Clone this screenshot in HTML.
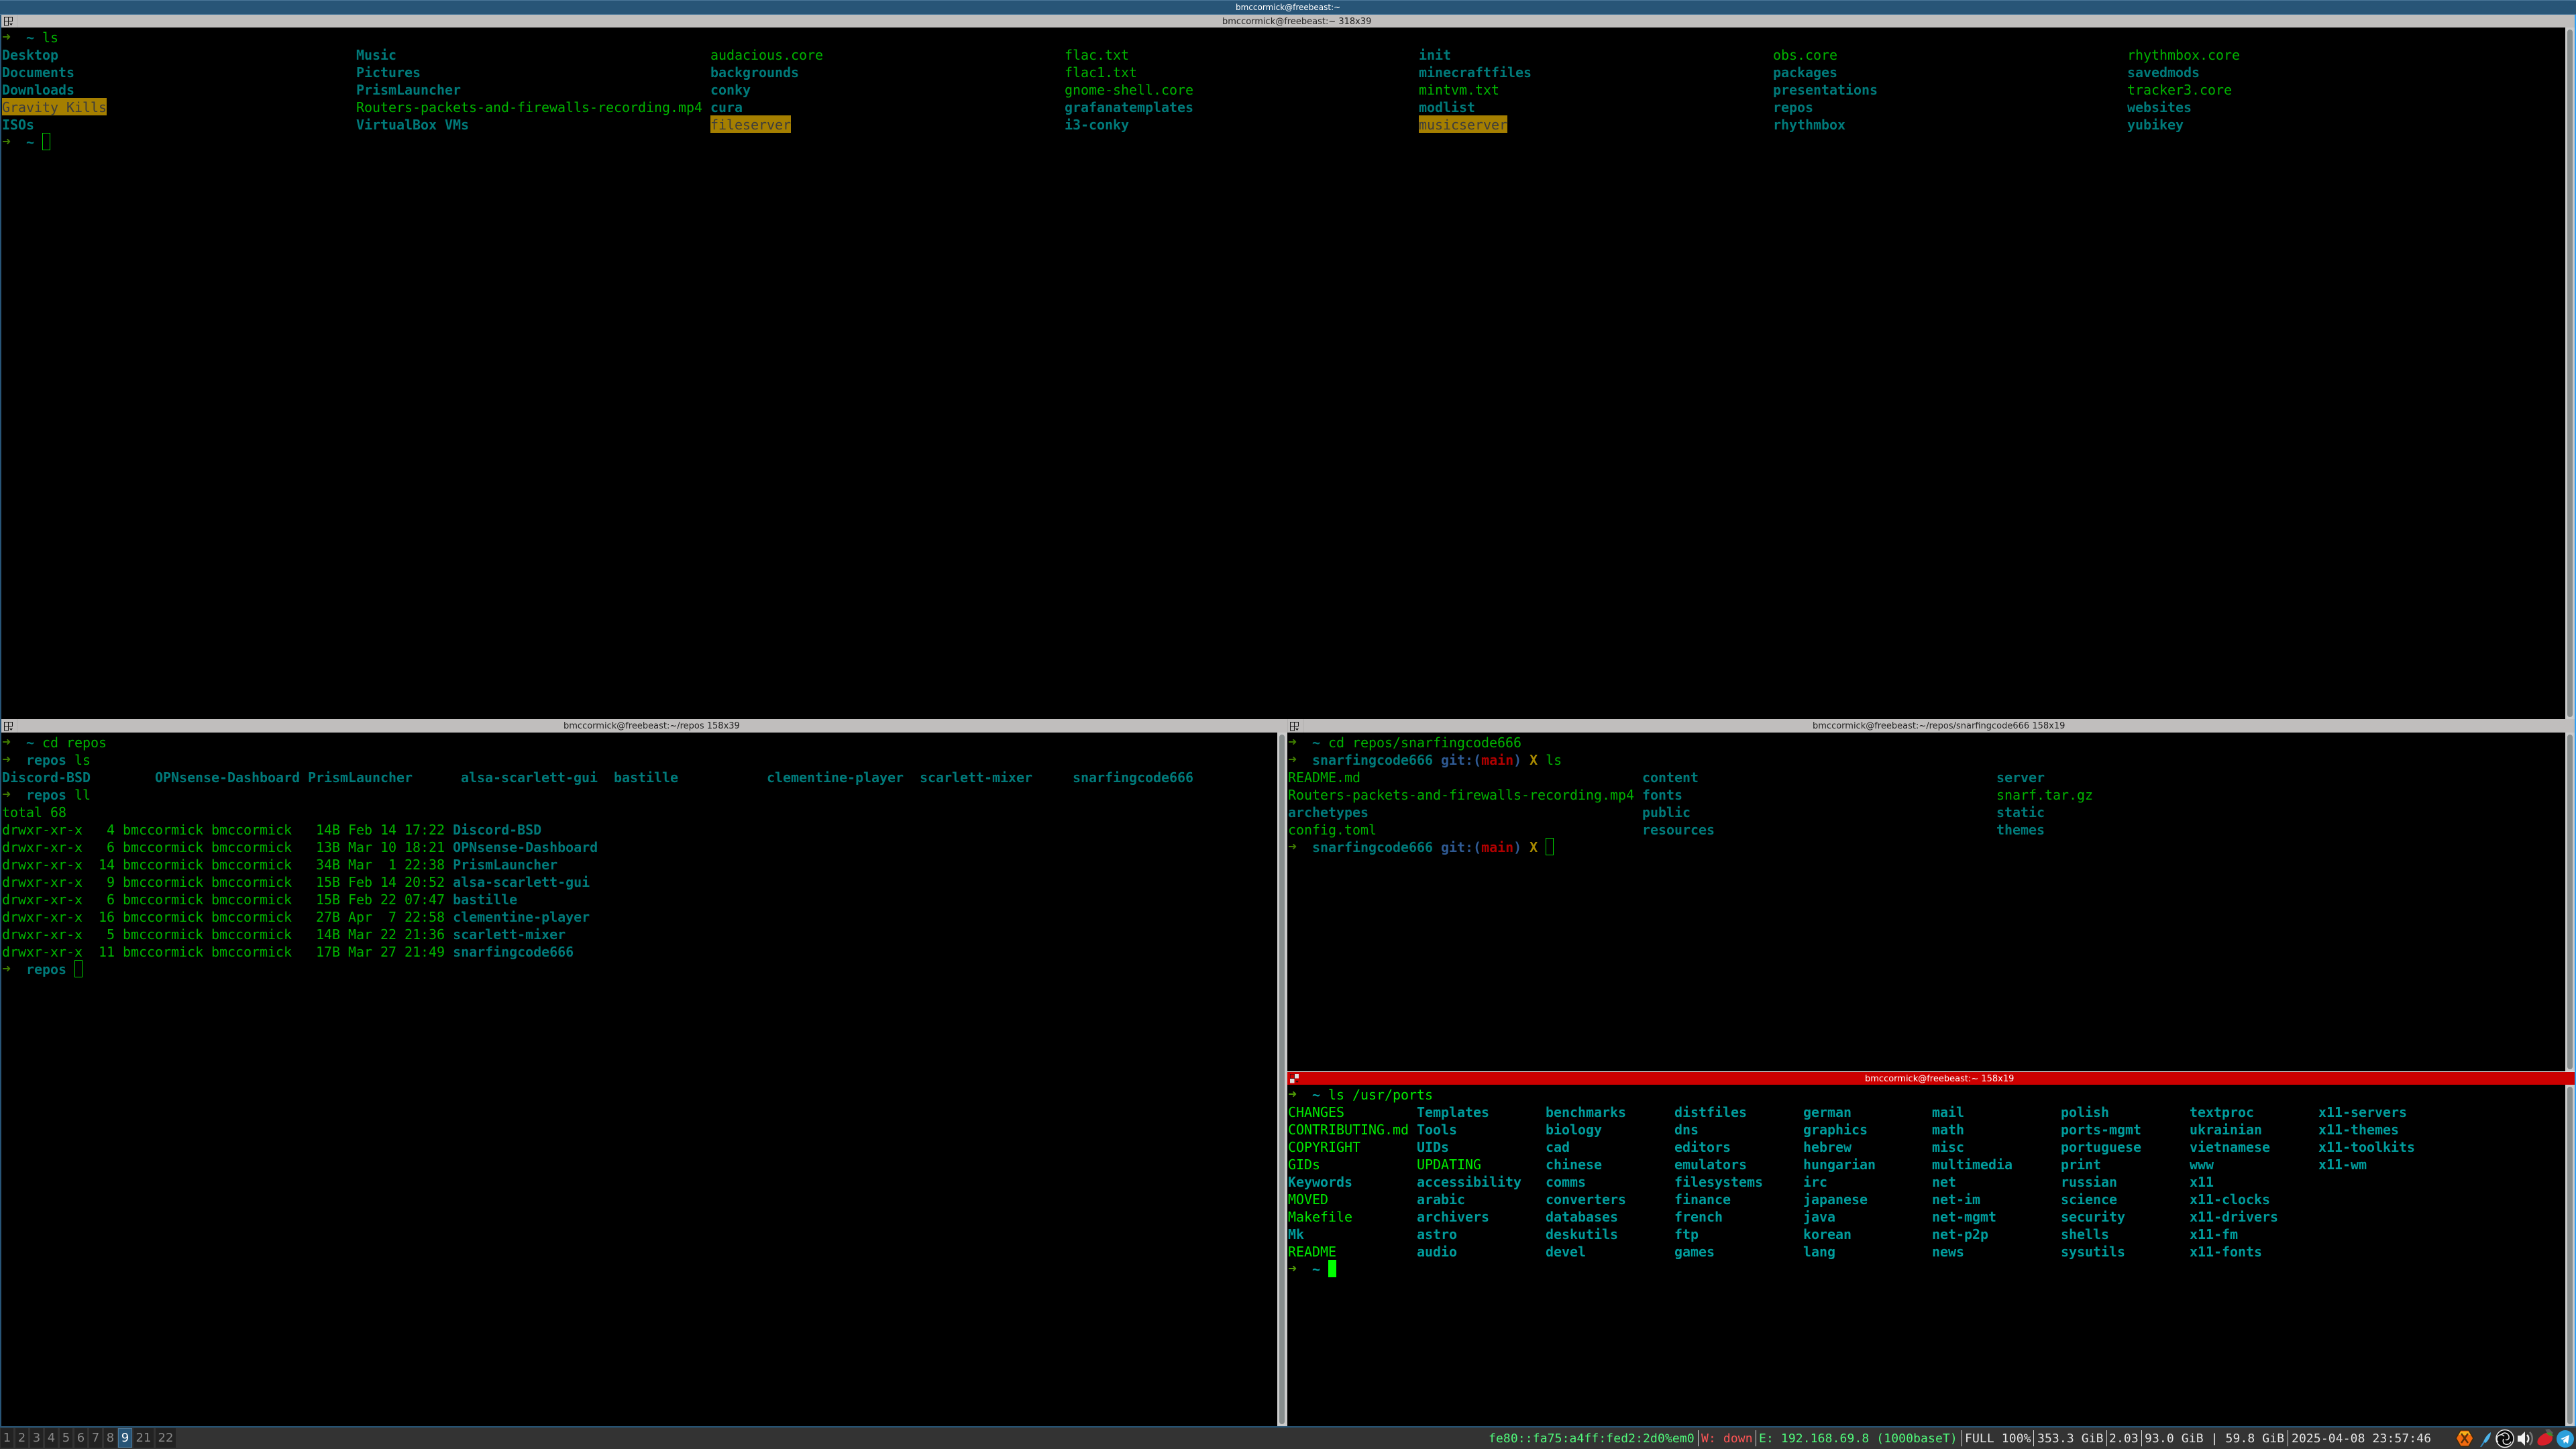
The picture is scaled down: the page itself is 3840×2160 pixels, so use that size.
<!DOCTYPE html>
<html><head><meta charset="utf-8"><style>
html,body{margin:0;padding:0;width:3840px;height:2160px;overflow:hidden;background:#000}
.a{position:absolute}
.p{position:absolute;margin-top:1px;font:20px/26px "DejaVu Sans Mono","Liberation Mono",monospace;letter-spacing:-.04px;white-space:pre;color:#00b400}
.p b{font-weight:700;color:#007a7a}
.p i{font-style:normal;font-weight:700;color:#3f7d00;display:inline-block;width:12px;font-family:"DejaVu Sans",sans-serif;font-size:16px;vertical-align:top;position:relative;top:-1px}
.p u{text-decoration:none;font-weight:700;color:#007a7a}
.p s{text-decoration:none;font-weight:700;color:#2f5a94}
.p em{font-style:normal;font-weight:700;color:#b00000}
.p q{quotes:none;font-weight:700;color:#a88a00}
.p q:before,.p q:after{content:none}
.h{background:#a57f00;color:#3c3c3c;display:inline-block;height:26px;line-height:28px;vertical-align:top;position:relative;top:-1px}
.f{color:#00ea00}
.f b{color:#009c9c}
.f i{color:#4e9a06}
.f u{color:#009c9c}
.cur{display:inline-block;box-sizing:border-box;width:12px;height:26px;border:1px solid #00d000;vertical-align:top;position:relative;top:-1px}
.tt{position:absolute;margin-top:1px;font:13px/20px "DejaVu Sans","Liberation Sans",sans-serif;color:#222;white-space:pre}
.tb{position:absolute;height:19px;background:#c0bebd}
.trough{position:absolute;background:#cbcbcb;width:15px}
.thumb{position:absolute;left:3px;width:8px;background:#878d8d;border-radius:4px;top:3px;bottom:3px}
.ws{position:absolute;top:2129px;height:29px;background:#222;color:#888;font:18px/29px "DejaVu Sans","Liberation Sans",sans-serif;text-align:center}
.st{position:absolute;top:2131px;font:18px/28px "DejaVu Sans Mono","Liberation Mono",monospace;letter-spacing:.12px;white-space:pre;color:#e6e6e6}
.sep{position:absolute;top:2132px;height:24px;width:1px;background:#ddd}
</style></head><body>

<!-- i3 window title -->
<div class="a" style="left:0;top:0;width:3840px;height:22px;background:#285577"></div>
<div class="a" style="left:0;top:0;width:3840px;height:1px;background:#4c7899"></div>
<div class="a" style="left:0;top:21px;width:3840px;height:1px;background:#4c7899"></div>
<div class="tt" style="left:1842px;top:0px;font-size:12px;color:#fff">bmccormick@freebeast:~</div>

<!-- window borders -->
<div class="a" style="left:0;top:22px;width:2px;height:2104px;background:#285577"></div>
<div class="a" style="left:3838px;top:22px;width:2px;height:2104px;background:#2e9ef4"></div>
<div class="a" style="left:0;top:2126px;width:3840px;height:2px;background:#285577"></div>

<!-- terminator title bars -->
<div class="tb" style="left:2px;top:22px;width:3836px"></div>
<div class="tb" style="left:2px;top:1072px;width:3836px;height:20px"></div>
<div class="a" style="left:1919px;top:1597px;width:1919px;height:1px;background:#ddd"></div>
<div class="a" style="left:1919px;top:1598px;width:1919px;height:19px;background:#cc0000"></div>

<div class="a" style="left:25px;top:22px;width:1px;height:19px;background:#b2b0af"></div>
<div class="a" style="left:25px;top:1072px;width:1px;height:20px;background:#b2b0af"></div>
<div class="a" style="left:1919px;top:1072px;width:1px;height:20px;background:#b2b0af"></div>
<div class="a" style="left:1943px;top:1072px;width:1px;height:20px;background:#b2b0af"></div>

<svg class="a" style="left:6px;top:25px" width="14" height="14"><path d="M.5.5h12v6h-12zM6.500.5v6M.5 6.500v6.500h6v-6.500" fill="none" stroke="#111"/><path d="M8 10h5l-2.500 3z" fill="#111"/></svg>
<svg class="a" style="left:6px;top:1076px" width="14" height="14"><path d="M.5.5h12v6h-12zM6.500.5v6M.5 6.500v6.500h6v-6.500" fill="none" stroke="#111"/><path d="M8 10h5l-2.500 3z" fill="#111"/></svg>
<svg class="a" style="left:1923px;top:1076px" width="14" height="14"><path d="M.5.5h12v6h-12zM6.500.5v6M.5 6.500v6.500h6v-6.500" fill="none" stroke="#111"/><path d="M8 10h5l-2.500 3z" fill="#111"/></svg>
<svg class="a" style="left:1923px;top:1601px" width="14" height="14"><rect x="0" y="0" width="7" height="7" fill="#cc0000" stroke="#111"/><rect x="7" y="0" width="6" height="6.500" fill="#ddd"/><rect x="0" y="7" width="6.500" height="6.500" fill="#ddd"/><path d="M8 10h5l-2.500 3z" fill="#111"/></svg>

<div class="tt" style="left:1822px;top:22px">bmccormick@freebeast:~ 318x39</div>
<div class="tt" style="left:840px;top:1072px">bmccormick@freebeast:~/repos 158x39</div>
<div class="tt" style="left:2702px;top:1072px">bmccormick@freebeast:~/repos/snarfingcode666 158x19</div>
<div class="tt" style="left:2780px;top:1598px;color:#fff">bmccormick@freebeast:~ 158x19</div>

<!-- scrollbars -->
<div class="trough" style="left:3824px;top:41px;width:14px;height:1031px"><div class="thumb"></div></div>
<div class="trough" style="left:1904px;top:1092px;height:1034px"><div class="thumb"></div></div>
<div class="trough" style="left:3824px;top:1092px;width:14px;height:505px"><div class="thumb"></div></div>
<div class="trough" style="left:3824px;top:1617px;width:14px;height:509px"><div class="thumb"></div></div>

<!-- top pane -->
<div class="p" style="left:3px;top:42px"><i>➜</i>  <u>~</u> ls
<b>Desktop</b>
<b>Documents</b>
<b>Downloads</b>
<span class="h">Gravity Kills</span>
<b>ISOs</b>
<i>➜</i>  <u>~</u> <span class="cur"></span></div>
<div class="p" style="left:531px;top:68px"><b>Music</b>
<b>Pictures</b>
<b>PrismLauncher</b>
Routers-packets-and-firewalls-recording.mp4
<b>VirtualBox VMs</b></div>
<div class="p" style="left:1059px;top:68px">audacious.core
<b>backgrounds</b>
<b>conky</b>
<b>cura</b>
<span class="h">fileserver</span></div>
<div class="p" style="left:1587px;top:68px">flac.txt
flac1.txt
gnome-shell.core
<b>grafanatemplates</b>
<b>i3-conky</b></div>
<div class="p" style="left:2115px;top:68px"><b>init</b>
<b>minecraftfiles</b>
mintvm.txt
<b>modlist</b>
<span class="h">musicserver</span></div>
<div class="p" style="left:2643px;top:68px">obs.core
<b>packages</b>
<b>presentations</b>
<b>repos</b>
<b>rhythmbox</b></div>
<div class="p" style="left:3171px;top:68px">rhythmbox.core
<b>savedmods</b>
tracker3.core
<b>websites</b>
<b>yubikey</b></div>

<!-- left pane -->
<div class="p" style="left:3px;top:1093px"><i>➜</i>  <u>~</u> cd repos
<i>➜</i>  <u>repos</u> ls
<b>Discord-BSD</b>
<i>➜</i>  <u>repos</u> ll
total 68
drwxr-xr-x   4 bmccormick bmccormick   14B Feb 14 17:22 <b>Discord-BSD</b>
drwxr-xr-x   6 bmccormick bmccormick   13B Mar 10 18:21 <b>OPNsense-Dashboard</b>
drwxr-xr-x  14 bmccormick bmccormick   34B Mar  1 22:38 <b>PrismLauncher</b>
drwxr-xr-x   9 bmccormick bmccormick   15B Feb 14 20:52 <b>alsa-scarlett-gui</b>
drwxr-xr-x   6 bmccormick bmccormick   15B Feb 22 07:47 <b>bastille</b>
drwxr-xr-x  16 bmccormick bmccormick   27B Apr  7 22:58 <b>clementine-player</b>
drwxr-xr-x   5 bmccormick bmccormick   14B Mar 22 21:36 <b>scarlett-mixer</b>
drwxr-xr-x  11 bmccormick bmccormick   17B Mar 27 21:49 <b>snarfingcode666</b>
<i>➜</i>  <u>repos</u> <span class="cur"></span></div>
<div class="p" style="left:231px;top:1145px"><b>OPNsense-Dashboard</b></div>
<div class="p" style="left:459px;top:1145px"><b>PrismLauncher</b></div>
<div class="p" style="left:687px;top:1145px"><b>alsa-scarlett-gui</b></div>
<div class="p" style="left:915px;top:1145px"><b>bastille</b></div>
<div class="p" style="left:1143px;top:1145px"><b>clementine-player</b></div>
<div class="p" style="left:1371px;top:1145px"><b>scarlett-mixer</b></div>
<div class="p" style="left:1599px;top:1145px"><b>snarfingcode666</b></div>

<!-- right top pane -->
<div class="p" style="left:1920px;top:1093px"><i>➜</i>  <u>~</u> cd repos/snarfingcode666
<i>➜</i>  <u>snarfingcode666</u> <s>git:(</s><em>main</em><s>)</s> <q>X</q> ls
README.md
Routers-packets-and-firewalls-recording.mp4
<b>archetypes</b>
config.toml
<i>➜</i>  <u>snarfingcode666</u> <s>git:(</s><em>main</em><s>)</s> <q>X</q> <span class="cur"></span></div>
<div class="p" style="left:2448px;top:1145px"><b>content</b>
<b>fonts</b>
<b>public</b>
<b>resources</b></div>
<div class="p" style="left:2976px;top:1145px"><b>server</b>
snarf.tar.gz
<b>static</b>
<b>themes</b></div>

<!-- right bottom pane (focused) -->
<div class="p f" style="left:1920px;top:1618px"><i>➜</i>  <u>~</u> ls /usr/ports
CHANGES
CONTRIBUTING.md
COPYRIGHT
GIDs
<b>Keywords</b>
MOVED
Makefile
<b>Mk</b>
README
<i>➜</i>  <u>~</u> <span class="cur" style="background:#00ff00;border:0"></span></div>
<div class="p f" style="left:2112px;top:1644px"><b>Templates</b>
<b>Tools</b>
<b>UIDs</b>
UPDATING
<b>accessibility</b>
<b>arabic</b>
<b>archivers</b>
<b>astro</b>
<b>audio</b></div>
<div class="p f" style="left:2304px;top:1644px"><b>benchmarks</b>
<b>biology</b>
<b>cad</b>
<b>chinese</b>
<b>comms</b>
<b>converters</b>
<b>databases</b>
<b>deskutils</b>
<b>devel</b></div>
<div class="p f" style="left:2496px;top:1644px"><b>distfiles</b>
<b>dns</b>
<b>editors</b>
<b>emulators</b>
<b>filesystems</b>
<b>finance</b>
<b>french</b>
<b>ftp</b>
<b>games</b></div>
<div class="p f" style="left:2688px;top:1644px"><b>german</b>
<b>graphics</b>
<b>hebrew</b>
<b>hungarian</b>
<b>irc</b>
<b>japanese</b>
<b>java</b>
<b>korean</b>
<b>lang</b></div>
<div class="p f" style="left:2880px;top:1644px"><b>mail</b>
<b>math</b>
<b>misc</b>
<b>multimedia</b>
<b>net</b>
<b>net-im</b>
<b>net-mgmt</b>
<b>net-p2p</b>
<b>news</b></div>
<div class="p f" style="left:3072px;top:1644px"><b>polish</b>
<b>ports-mgmt</b>
<b>portuguese</b>
<b>print</b>
<b>russian</b>
<b>science</b>
<b>security</b>
<b>shells</b>
<b>sysutils</b></div>
<div class="p f" style="left:3264px;top:1644px"><b>textproc</b>
<b>ukrainian</b>
<b>vietnamese</b>
<b>www</b>
<b>x11</b>
<b>x11-clocks</b>
<b>x11-drivers</b>
<b>x11-fm</b>
<b>x11-fonts</b></div>
<div class="p f" style="left:3456px;top:1644px"><b>x11-servers</b>
<b>x11-themes</b>
<b>x11-toolkits</b>
<b>x11-wm</b></div>

<!-- status bar -->
<div class="a" style="left:0;top:2128px;width:3840px;height:32px;background:#333"></div>
<div class="ws" style="left:1px;width:19px">1</div>
<div class="ws" style="left:23px;width:19px">2</div>
<div class="ws" style="left:45px;width:19px">3</div>
<div class="ws" style="left:67px;width:19px">4</div>
<div class="ws" style="left:89px;width:19px">5</div>
<div class="ws" style="left:111px;width:19px">6</div>
<div class="ws" style="left:133px;width:19px">7</div>
<div class="ws" style="left:155px;width:19px">8</div>
<div class="ws" style="left:176px;width:19px;background:#285577;border:1px solid #4c7899;color:#fff;height:27px;line-height:27px">9</div>
<div class="ws" style="left:199px;width:30px">21</div>
<div class="ws" style="left:232px;width:30px">22</div>

<div class="st" style="left:2219px;color:#50fa7b">fe80::fa75:a4ff:fed2:2d0%em0</div>
<div class="sep" style="left:2531px"></div>
<div class="st" style="left:2536px;color:#ff5555">W: down</div>
<div class="sep" style="left:2617px"></div>
<div class="st" style="left:2622px;color:#50fa7b">E: 192.168.69.8 (1000baseT)</div>
<div class="sep" style="left:2924px"></div>
<div class="st" style="left:2929px">FULL 100%</div>
<div class="sep" style="left:3031px"></div>
<div class="st" style="left:3037px">353.3 GiB</div>
<div class="sep" style="left:3140px"></div>
<div class="st" style="left:3144px">2.03</div>
<div class="sep" style="left:3192px"></div>
<div class="st" style="left:3197px">93.0 GiB | 59.8 GiB</div>
<div class="sep" style="left:3410px"></div>
<div class="st" style="left:3416px">2025-04-08 23:57:46</div>

<!-- tray -->
<svg class="a" style="left:3660px;top:2130px" width="180" height="30" viewBox="0 0 180 30">
  <!-- crossover hex -->
  <path d="M8 2h12l7 12-7 12H8L1 14z" fill="#f26a0f" stroke="#3a2a10" stroke-width="1.500"/>
  <path d="M8 4h12l3 5H5z" fill="#f5b21a"/>
  <path d="M9 7l10 14M19 7L9 21" stroke="#5a300a" stroke-width="2.500"/>
  <!-- feather -->
  <path d="M53 5c-5 3-9 9-11 14l3 2c4-3 8-10 8-16z" fill="#4db4ea"/>
  <path d="M42 19l-5 8 2 0 5-7z" fill="#2f8fc8"/>
  <!-- OBS -->
  <circle cx="74" cy="14.500" r="13" fill="#0a0a0a" stroke="#eee" stroke-width="1.500"/>
  <path d="M69 8a6.500 6.500 0 0 1 11 6c-1 2-3 3-5 2M83 19a6.500 6.500 0 0 1-11 2c-1-2-1-4 0-6M64 20a6.500 6.500 0 0 1 3-11c2-1 4 0 6 2" fill="none" stroke="#eee" stroke-width="1.500"/>
  <!-- speaker -->
  <path d="M93 10h5l6-6v21l-6-6h-5z" fill="#f2f2f2"/>
  <path d="M107 9c3 3 3 8 0 11" fill="none" stroke="#f2f2f2" stroke-width="2.500"/>
  <path d="M111 5c5 5 5 14 0 19" fill="none" stroke="#777" stroke-width="2.500"/>
  <!-- strawberry -->
  <path d="M140 6C146 9 146 15 143 19C139 24 130 26 125 24C121 22 122 16 126 12C130 8 135 5 140 6z" fill="#d9202a"/>
  <path d="M134 1l6-1 6 6-3 3-6-3z" fill="#5a5a5a"/>
  <path d="M135 6l7-1 5 6-7-1z" fill="#3f8a2a"/>
  <!-- telegram -->
  <circle cx="164" cy="15" r="13" fill="#2ba0db"/>
  <path d="M157 15l13-6-2 13-4-3-2 3-1-5 6-5-7 4z" fill="#fff"/>
</svg>
</body></html>
